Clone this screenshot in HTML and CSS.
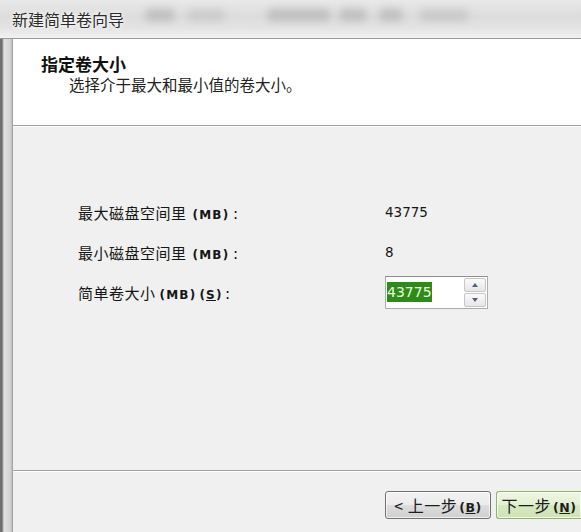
FILE: index.html
```html
<!DOCTYPE html>
<html lang="zh-CN">
<head>
  <meta charset="UTF-8">
  <title>新建简单卷向导</title>
  <link rel="stylesheet" href="styles.css">
</head>
<body>
  <div class="window">
    <div class="titlebar">
      <span class="title">新建简单卷向导</span>
      <div class="glass">
        <span class="blob b1"></span>
        <span class="blob b2"></span>
        <span class="blob b3"></span>
        <span class="blob b4"></span>
        <span class="blob b5"></span>
        <span class="blob b6"></span>
      </div>
    </div>

    <div class="frame">
      <div class="client">
        <div class="header">
          <div class="header-title">指定卷大小</div>
          <div class="header-sub">选择介于最大和最小值的卷大小。</div>
        </div>

        <div class="body">
          <div class="rows">
            <div class="label">最大磁盘空间里<span class="unit spaced">(MB)</span>:</div>
            <div class="value">43775</div>

            <div class="label">最小磁盘空间里<span class="unit spaced">(MB)</span>:</div>
            <div class="value">8</div>

            <div class="label">简单卷大小<span class="unit">(MB)</span><span class="unit tight">(<u>S</u>)</span>:</div>
            <div class="spin">
              <div class="spin-field"><span class="sel">43775</span></div>
              <div class="spin-btns">
                <div class="spin-btn"><span class="arrow up"></span></div>
                <div class="spin-btn"><span class="arrow down"></span></div>
              </div>
            </div>
          </div>
        </div>

        <div class="footer">
          <button class="btn">&lt; 上一步<span class="key">(<u>B</u>)</span></button>
          <button class="btn btn-default">下一步<span class="key">(<u>N</u>)</span></button>
        </div>
      </div>
    </div>
  </div>
</body>
</html>
```

FILE: styles.css
```css
html, body {
  margin: 0;
  padding: 0;
  overflow: hidden;
}
body {
  width: 581px;
  height: 532px;
  background: #f0f0f0;
  font-family: "Noto Sans CJK SC", "DejaVu Sans", sans-serif;
  color: #161616;
}
.window {
  width: 581px;
  height: 532px;
  display: flex;
  flex-direction: column;
}

/* glass title bar */
.titlebar {
  height: 38px;
  position: relative;
  background: linear-gradient(to bottom, #e9e9e9 0%, #dcdcdc 45%, #e4e4e4 75%, #f2f2f2 100%);
  border-bottom: 1px solid #9a9a9a;
  overflow: hidden;
}
.title {
  position: relative;
  z-index: 2;
  display: inline-block;
  margin: 9px 0 0 12px;
  font-size: 16px;
  line-height: 20px;
  color: #2b2b2b;
  text-shadow: 0 0 6px #ffffff, 0 0 3px #ffffff;
}
.glass {
  position: absolute;
  inset: 0;
}
.blob {
  position: absolute;
  top: 9px;
  height: 12px;
  background: #a9a9a9;
  filter: blur(4px);
  opacity: 0.6;
}
.b1 { left: 146px; width: 28px; }
.b2 { left: 188px; width: 36px; opacity: 0.35; }
.b3 { left: 268px; width: 62px; }
.b4 { left: 340px; width: 26px; }
.b5 { left: 380px; width: 22px; }
.b6 { left: 420px; width: 48px; opacity: 0.4; }

/* left window border */
.frame {
  flex: 1;
  display: flex;
  border-left: 2px solid #6e6e6e;
  background: linear-gradient(to right, #6e6e6e 0, #e2e2e2 2px, #d4d4d4 8px, #bdbdbd 10px, #8a8a8a 11px);
  padding-left: 11px;
}
.client {
  flex: 1;
  display: flex;
  flex-direction: column;
  background: #f0f0f0;
}

.header {
  height: 87px;
  background: #ffffff;
  border-bottom: 1px solid #a0a0a0;
  box-shadow: 0 1px 0 #ffffff;
  padding: 15px 0 0 28px;
  box-sizing: border-box;
}
.header-title {
  font-size: 17px;
  font-weight: bold;
  line-height: 20px;
  color: #111;
}
.header-sub {
  font-size: 15.5px;
  line-height: 21px;
  padding-left: 28px;
  color: #222;
}

.body {
  height: 345px;
  padding: 66px 0 0 65px;
  box-sizing: border-box;
  border-bottom: 1px solid #a0a0a0;
  box-shadow: 0 1px 0 #ffffff;
}
.rows {
  display: grid;
  grid-template-columns: 307px auto;
  grid-auto-rows: 40px;
  align-items: center;
  font-size: 15px;
}
.label {
  letter-spacing: 0.5px;
}
.unit {
  font-family: "DejaVu Sans", sans-serif;
  font-weight: bold;
  font-size: 12px;
  letter-spacing: 1.2px;
  margin-left: 4px;
}
.unit.spaced {
  margin-left: 6px;
  margin-right: 4px;
}
.unit.tight {
  margin-left: 3px;
  margin-right: 3px;
}
.value {
  font-family: "DejaVu Sans", sans-serif;
  font-size: 13.5px;
}

.spin {
  display: flex;
  width: 103px;
  height: 33px;
  border: 1px solid #abadb3;
  border-top-color: #8e8f8f;
  background: #fff;
  box-sizing: border-box;
}
.spin-field {
  flex: 1;
  padding: 6px 0 0 1px;
  font-family: "DejaVu Sans", sans-serif;
  font-size: 14px;
  line-height: 18px;
}
.sel {
  background: #2f8b17;
  color: #e8ffe0;
  padding: 2px 0;
}
.spin-btns {
  width: 22px;
  margin: 1px 1px 1px 0;
  display: flex;
  flex-direction: column;
  gap: 1px;
}
.spin-btn {
  flex: 1;
  border: 1px solid #c6c6c6;
  border-radius: 2px;
  background: linear-gradient(to bottom, #fafafa, #e6e6e6);
  display: flex;
  align-items: center;
  justify-content: center;
}
.arrow {
  width: 0;
  height: 0;
  border-left: 3.5px solid transparent;
  border-right: 3.5px solid transparent;
}
.arrow.up {
  border-bottom: 4px solid #4d6185;
}
.arrow.down {
  border-top: 4px solid #4d6185;
}

.footer {
  flex: 1;
  display: flex;
  gap: 5px;
  padding: 20px 0 0 372px;
}
.btn {
  width: 106px;
  height: 28px;
  border: 1px solid #707070;
  border-radius: 3px;
  background: linear-gradient(to bottom, #f2f2f2 0%, #ebebeb 50%, #dddddd 51%, #cfcfcf 100%);
  font-family: "Noto Sans CJK SC", sans-serif;
  font-size: 16px;
  letter-spacing: 0.5px;
  color: #1c1c1c;
  padding: 0;
  box-shadow: inset 0 0 0 1px rgba(255,255,255,0.7);
}
.key {
  font-family: "DejaVu Sans", sans-serif;
  font-size: 12.5px;
  font-weight: bold;
  margin-left: 2px;
}
.btn-default {
  width: 85px;
  border-color: #8db46a;
  border-right: none;
  border-radius: 3px 0 0 3px;
  background: linear-gradient(to bottom, #eef6e2 0%, #e3efd2 50%, #d6e8c0 51%, #cfe3b5 100%);
}
```
